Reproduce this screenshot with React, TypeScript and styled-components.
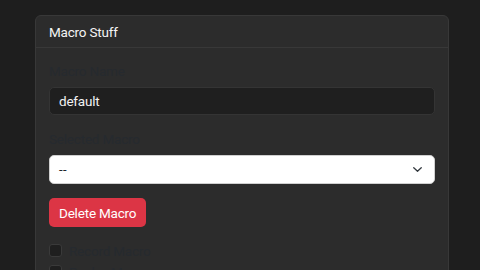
import React from "react";
import styled, { createGlobalStyle } from "styled-components";

const Global = createGlobalStyle`
  html, body { margin: 0; padding: 0; background: #1e1e1e; }
  body { font-family: Roboto, "Liberation Sans", sans-serif; width: 480px; height: 270px; overflow: hidden; }
`;

const Page = styled.div`
  padding: 15px 31px 0 35px;
`;

const Card = styled.div`
  background: #2c2c2c;
  border: 1px solid #383838;
  border-radius: 6px;
  overflow: hidden;
`;

const CardHeader = styled.div`
  height: 31px;
  display: flex;
  align-items: center;
  padding: 0 13px;
  border-bottom: 1px solid #383838;
  color: #f4f4f4;
  font-size: 13.5px;
  letter-spacing: -0.2px;
`;

const CardBody = styled.div`
  padding: 13px 13px 0 13px;
  display: flex;
  flex-direction: column;
`;

const Group = styled.div`
  display: flex;
  flex-direction: column;
  margin-bottom: 14px;
`;

const Label = styled.label`
  color: #262a2f;
  font-size: 13.5px;
  letter-spacing: -0.2px;
  line-height: 20px;
  margin-bottom: 6px;
`;

const TextInput = styled.input`
  box-sizing: border-box;
  height: 28px;
  background: #1f1f1f;
  border: 1px solid #343434;
  border-radius: 5px;
  color: #f2f2f2;
  font-family: inherit;
  font-size: 13.5px;
  letter-spacing: -0.2px;
  padding: 0 9px;
  outline: none;
`;

const SelectBox = styled.div`
  box-sizing: border-box;
  height: 29px;
  background: #ffffff;
  border: 1px solid #d0d0d0;
  border-radius: 5px;
  color: #212529;
  font-size: 13px;
  padding: 0 12px 0 9px;
  display: flex;
  align-items: center;
  justify-content: space-between;
`;

const Dashes = styled.span`
  letter-spacing: 0.5px;
`;

const DangerButton = styled.button`
  align-self: flex-start;
  height: 29px;
  padding: 0 10px;
  background: #dc3545;
  border: none;
  border-radius: 5px;
  color: #ffffff;
  font-family: inherit;
  font-size: 13.5px;
  letter-spacing: -0.2px;
  margin-bottom: 13px;
`;

const CheckRow = styled.div`
  display: flex;
  align-items: center;
  height: 21px;
`;

const Box = styled.span`
  box-sizing: border-box;
  width: 13px;
  height: 13px;
  background: #1f1f1f;
  border: 1px solid #3a3a3a;
  border-radius: 3px;
  margin-right: 7px;
`;

const CheckText = styled.span`
  color: #262a2f;
  font-size: 13.5px;
  letter-spacing: -0.2px;
`;

export default function App() {
  return (
    <>
      <Global />
      <Page>
        <Card>
          <CardHeader>Macro Stuff</CardHeader>
          <CardBody>
            <Group>
              <Label>Macro Name</Label>
              <TextInput defaultValue="default" />
            </Group>
            <Group>
              <Label>Selected Macro</Label>
              <SelectBox>
                <Dashes>--</Dashes>
                <svg width="9" height="5" viewBox="0 0 9 5">
                  <path d="M0.75 0.75l3.75 3.5 3.75-3.5" fill="none" stroke="#343a40" strokeWidth="1.3" strokeLinecap="round" strokeLinejoin="round" />
                </svg>
              </SelectBox>
            </Group>
            <DangerButton>Delete Macro</DangerButton>
            <CheckRow>
              <Box />
              <CheckText>Record Macro</CheckText>
            </CheckRow>
            <CheckRow>
              <Box />
              <CheckText>Replay Macro</CheckText>
            </CheckRow>
          </CardBody>
        </Card>
      </Page>
    </>
  );
}
